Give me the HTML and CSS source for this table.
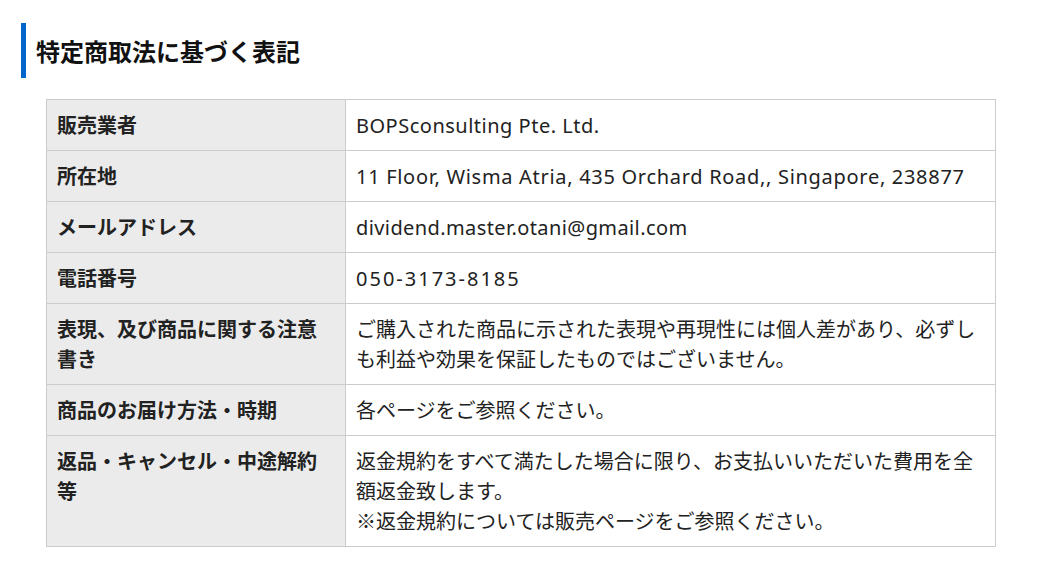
FILE: index.html
```html
<!DOCTYPE html>
<html lang="ja">
<head>
<meta charset="utf-8">
<link rel="stylesheet" href="styles.css">
</head>
<body>
<div class="page">
  <h2 class="heading">特定商取法に基づく表記</h2>
  <table class="law">
    <tr><th>販売業者</th><td><span class="latin">BOPSconsulting Pte. Ltd.</span></td></tr>
    <tr><th>所在地</th><td><span class="latin address">11 Floor, Wisma Atria, 435 Orchard Road,, Singapore, 238877</span></td></tr>
    <tr><th>メールアドレス</th><td class="mail"><span class="latin mail-text">dividend.master.otani@gmail.com</span></td></tr>
    <tr><th>電話番号</th><td><span class="latin phone">050-3173-8185</span></td></tr>
    <tr><th>表現、及び商品に関する注意書き</th><td>ご購入された商品に示された表現や再現性には個人差があり、必ずしも利益や効果を保証したものではございません。</td></tr>
    <tr><th>商品のお届け方法・時期</th><td>各ページをご参照ください。</td></tr>
    <tr><th>返品・キャンセル・中途解約等</th><td>返金規約をすべて満たした場合に限り、お支払いいただいた費用を全額返金致します。<br>※返金規約については販売ページをご参照ください。</td></tr>
  </table>
</div>
</body>
</html>
```

FILE: styles.css
```css
html, body {
  margin: 0;
  padding: 0;
  background: #fff;
}
body {
  font-family: "Noto Sans CJK JP", "Noto Sans", sans-serif;
  color: #222;
}
.page {
  padding: 23px 0 0 21px;
}
.heading {
  margin: 0;
  border-left: 5px solid #0066cc;
  padding: 10px 0 10px 10px;
  font-size: 24px;
  line-height: 35px;
  font-weight: bold;
  color: #111;
}
.law {
  margin: 21px 0 0 25px;
  width: 950px;
  border-collapse: collapse;
  font-size: 20px;
  line-height: 30px;
}
.law th, .law td {
  border: 1px solid #cccccc;
  padding: 10px 10px;
  text-align: left;
  vertical-align: top;
}
.law th {
  width: 278px;
  background: #ebebeb;
  font-weight: bold;
  font-size: 20px;
}
.law td {
  font-weight: normal;
}
.latin {
  font-family: "Noto Sans", sans-serif;
  font-size: 20px;
  line-height: 20px;
  letter-spacing: 0.5px;
}
.address {
  letter-spacing: 0.7px;
}
.phone {
  letter-spacing: 2px;
}
.mail-text {
  letter-spacing: 0.4px;
}
.mail {
  padding-left: 7px;
}
```
